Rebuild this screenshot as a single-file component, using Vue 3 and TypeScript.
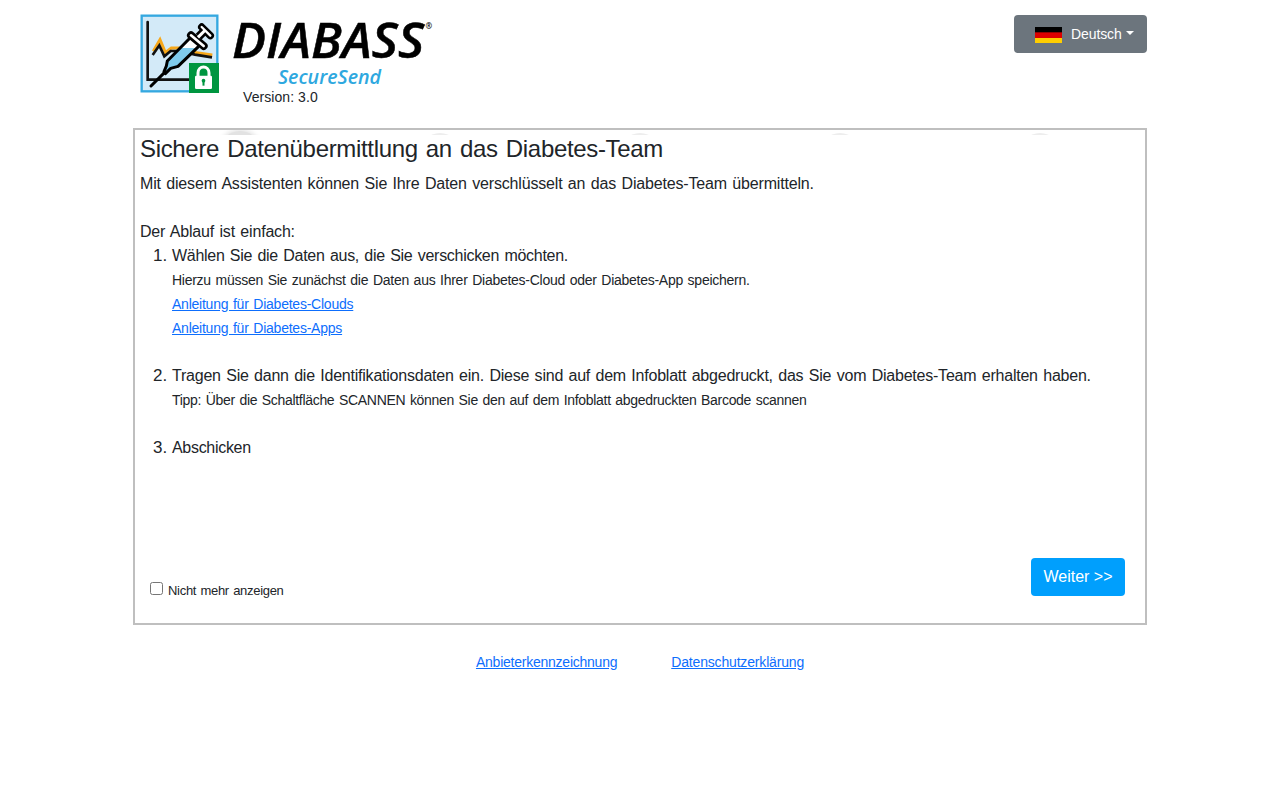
<script setup lang="ts">
import { ref } from 'vue'

const version = '3.0'
const language = ref('Deutsch')
const hideIntro = ref(false)

const guides = [
  { name: 'clouds', title: 'Anleitung für Diabetes-Clouds' },
  { name: 'apps', title: 'Anleitung für Diabetes-Apps' }
]

// step bubbles of the wizard, mostly covered by the intro text
const steps = [1, 2, 3, 4, 5]
const currentStep = ref(1)

const next = () => {
  currentStep.value = Math.min(currentStep.value + 1, steps.length)
}
</script>

<template>
  <div class="page">
    <header class="header">
      <div class="brand">
        <svg class="brand-icon" viewBox="30 27 240 240">
          <rect x="35" y="32" width="227" height="227" fill="#d3eaf8" stroke="#35a8e0" stroke-width="7" />
          <path d="M53 51V224H190" fill="none" stroke="#111" stroke-width="8" stroke-linecap="round" />
          <path d="M70 139L90 104L106 143L124 129H152L190 142L247 150" fill="none" stroke="#f7a81b" stroke-width="9" />
          <path d="M68 150L88 121L103 154L122 138H150L195 149L246 157" fill="none" stroke="#111" stroke-width="8" />
          <path d="M63 243L104 202" stroke="#000" stroke-width="9" stroke-linecap="round" />
          <path d="M180 99L206 124L144 184L122 190L106 206L102 200L109 183L112 168Z" fill="#fff" />
          <path d="M150 129H200L144 184L122 190L106 206L102 200L109 183L112 168Z" fill="#7fcbed" />
          <path d="M180 99L112 168L109 183L102 200L106 206L122 190L144 184L206 124" fill="none" stroke="#000" stroke-width="9" stroke-linejoin="round" />
          <path d="M206 95L224 77" stroke="#000" stroke-width="25" />
          <path d="M183 91L221 123" stroke="#000" stroke-width="24" stroke-linecap="round" />
          <path d="M215 66L241 92" stroke="#000" stroke-width="22" stroke-linecap="round" />
          <path d="M204 97L226 75" stroke="#fff" stroke-width="9" />
          <path d="M183 91L221 123" stroke="#fff" stroke-width="8" stroke-linecap="round" />
          <path d="M215 66L241 92" stroke="#fff" stroke-width="7" stroke-linecap="round" />
          <rect x="177" y="174" width="90" height="90" fill="#009640" />
          <path d="M204 216V204C204 180 237 180 237 204V216" fill="none" stroke="#fff" stroke-width="9" />
          <rect x="195" y="212" width="51" height="40" rx="4" fill="#fff" />
          <circle cx="220.500" cy="227" r="5.500" fill="#009640" />
          <path d="M220.500 228V242" stroke="#009640" stroke-width="6" />
        </svg>
        <div class="brand-text">
          <svg class="wordmark" viewBox="230 14 210 74">
            <text class="wordmark-name" x="232" y="58" textLength="192" lengthAdjust="spacingAndGlyphs">DIABASS</text>
            <text class="wordmark-reg" x="425.500" y="29">®</text>
            <text class="wordmark-sub" x="278" y="84" textLength="103" lengthAdjust="spacingAndGlyphs">SecureSend</text>
          </svg>
          <span class="version">Version: {{ version }}</span>
        </div>
      </div>

      <button type="button" class="language">
        <svg class="flag" viewBox="0 0 27 16">
          <rect width="27" height="16" fill="#ffce00" />
          <rect width="27" height="11" fill="#d00" />
          <rect width="27" height="5.330" fill="#000" />
        </svg>
        <span>{{ language }}</span>
        <span class="caret"></span>
      </button>
    </header>

    <main class="wizard">
      <div class="bubbles">
        <div v-for="step in steps" :key="step" class="bubble-slot">
          <span class="bubble" :class="{ active: step === currentStep }"></span>
        </div>
      </div>

      <h1>Sichere Datenübermittlung an das Diabetes-Team</h1>
      <p class="lead">Mit diesem Assistenten können Sie Ihre Daten verschlüsselt an das Diabetes-Team übermitteln.</p>
      <p class="flow">Der Ablauf ist einfach:</p>

      <ol class="steps">
        <li>
          <span class="select">Wählen Sie die Daten aus, die Sie verschicken möchten.</span>
          <small class="note">Hierzu müssen Sie zunächst die Daten aus Ihrer Diabetes-Cloud oder Diabetes-App speichern.</small>
          <small v-for="guide in guides" :key="guide.name" :class="guide.name"><a href="#">{{ guide.title }}</a></small>
        </li>
        <li>
          <span class="identify">Tragen Sie dann die Identifikationsdaten ein. Diese sind auf dem Infoblatt abgedruckt, das Sie vom Diabetes-Team erhalten haben.</span>
          <small class="tip">Tipp: Über die Schaltfläche SCANNEN können Sie den auf dem Infoblatt abgedruckten Barcode scannen</small>
        </li>
        <li><span class="send">Abschicken</span></li>
      </ol>

      <div class="actions">
        <label class="hide-intro">
          <input type="checkbox" v-model="hideIntro">
          <span>Nicht mehr anzeigen</span>
        </label>
        <button type="button" class="next" @click="next">Weiter &gt;&gt;</button>
      </div>
    </main>

    <footer class="footer">
      <a href="#" class="imprint">Anbieterkennzeichnung</a>
      <a href="#" class="privacy">Datenschutzerklärung</a>
    </footer>
  </div>
</template>

<style>
body {
  margin: 0;
  background: #fff;
}
</style>

<style scoped>
.page {
  box-sizing: border-box;
  width: 1014px;
  margin: 0 auto;
  font-family: "Liberation Sans", Arial, sans-serif;
  font-size: 16px;
  line-height: 24px;
  color: #212529;
}

.header {
  display: flex;
  justify-content: space-between;
  align-items: flex-start;
  height: 128px;
  padding: 14px 0 0 7px;
  box-sizing: border-box;
}

.brand {
  display: flex;
  gap: 10px;
}

.brand-icon {
  width: 80px;
  height: 80px;
}

.brand-text {
  display: flex;
  flex-direction: column;
}

.wordmark {
  width: 210px;
  height: 74px;
  overflow: visible;
  font-family: "Open Sans", "Noto Sans", sans-serif;
  font-style: italic;
}

.wordmark-name {
  font-size: 48px;
  font-weight: 600;
  stroke: #000;
  stroke-width: 0.5px;
}

.wordmark-reg {
  font-size: 8px;
  font-weight: 600;
  font-style: normal;
}

.wordmark-sub {
  font-size: 19.5px;
  font-weight: 600;
  fill: #2ea8df;
}

.version {
  margin-left: 13px;
  font-size: 14px;
  line-height: 18px;
  letter-spacing: 0.07px;
}

.language {
  display: flex;
  align-items: center;
  width: 133px;
  height: 38px;
  margin-top: 1px;
  padding: 0 12px 0 21px;
  border: none;
  border-radius: 4px;
  background: #6c757d;
  color: #fff;
  font-family: inherit;
  font-size: 14px;
  letter-spacing: -0.1px;
}

.flag {
  width: 27px;
  height: 16px;
  margin: 2px 9px 0 0;
}

.caret {
  margin: -2px 0 0 4px;
  border-top: 4px solid #fff;
  border-left: 4px solid transparent;
  border-right: 4px solid transparent;
}

.wizard {
  position: relative;
  box-sizing: border-box;
  height: 497px;
  padding: 5px;
  border: 2px solid #bfbfbf;
}

.bubbles {
  position: absolute;
  top: 0;
  left: 5px;
  display: flex;
  width: 1000px;
  height: 5px;
  overflow: hidden;
}

.bubble-slot {
  display: flex;
  flex: 1;
  align-items: flex-start;
  justify-content: center;
}

.bubble {
  width: 40px;
  height: 40px;
  margin-top: 3px;
  border-radius: 50%;
  background: #ededed;
}

.bubble.active {
  margin-top: 1px;
  background: #e2e2e2;
  box-shadow: 0 0 4px 2px #e6e6e6;
}

h1 {
  margin: 0 0 9px;
  font-size: 24px;
  font-weight: 400;
  line-height: 28px;
  letter-spacing: -0.33px;
  word-spacing: 1.8px;
}

p {
  margin: 0;
  word-spacing: 1.2px;
}

.lead {
  letter-spacing: -0.176px;
}

.flow {
  margin-top: 24px;
  letter-spacing: -0.19px;
}

.steps {
  margin: 0;
  padding-left: 32px;
}

.steps li {
  margin-bottom: 24px;
}

.steps li::marker {
  font-size: 17px;
}

.steps span,
.steps small {
  display: block;
  white-space: nowrap;
  word-spacing: 1.2px;
}

.steps small {
  font-size: 14px;
  word-spacing: 1.05px;
}

.steps .select {
  letter-spacing: -0.29px;
}

.steps .note {
  letter-spacing: -0.265px;
}

.steps .clouds,
.steps .apps {
  letter-spacing: -0.235px;
}

.steps .identify {
  letter-spacing: -0.224px;
}

.steps .tip {
  letter-spacing: -0.31px;
}

.steps .send {
  letter-spacing: -0.3px;
}

a {
  color: #0d6efd;
}

.actions {
  display: flex;
  align-items: flex-end;
  justify-content: space-between;
  height: 112px;
  padding: 0 15px 0 10px;
}

.hide-intro {
  display: flex;
  align-items: flex-start;
  height: 14px;
  font-size: 13px;
  line-height: 18px;
  letter-spacing: -0.3px;
  word-spacing: 1px;
}

.hide-intro input {
  width: 13px;
  height: 13px;
  margin: 0 5px 0 0;
}

.next {
  width: 94px;
  height: 38px;
  padding: 0;
  border: none;
  border-radius: 4px;
  background: #009ffd;
  color: #fff;
  font-family: inherit;
  font-size: 16px;
}

.footer {
  display: flex;
  justify-content: center;
  gap: 54px;
  margin-top: 25px;
  font-size: 14px;
}

.imprint {
  letter-spacing: -0.24px;
}

.privacy {
  letter-spacing: -0.17px;
}
</style>
